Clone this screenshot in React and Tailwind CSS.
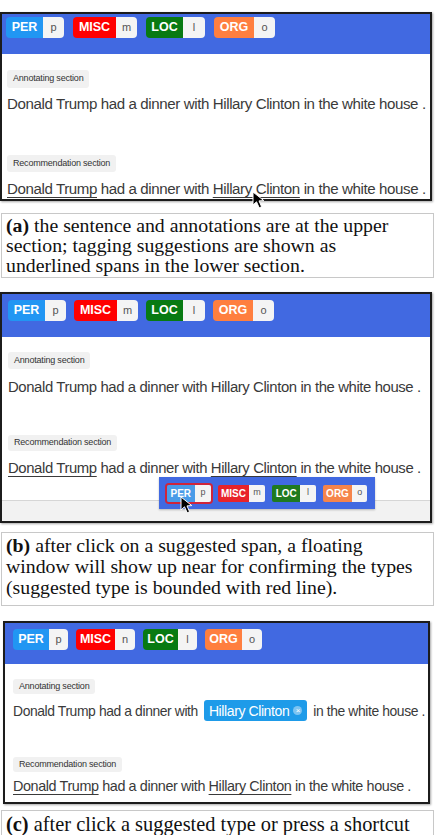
import React from "react";

const SANS = { fontFamily: '"Liberation Sans", Arial, sans-serif' };
const SERIF = { fontFamily: '"Liberation Serif", "Times New Roman", serif' };

// entity type buttons with their keyboard shortcut
function TypeChip({ label, hotkey, color, w, kw, small, outlined }) {
  return (
    <div
      className={
        "flex overflow-hidden " +
        (small ? "h-[17px] rounded-[2px] " : "h-[21px] rounded-[4px] ") +
        (outlined ? "ring-2 ring-[#d0243a]" : "")
      }
    >
      <div
        className={
          "flex items-center justify-center font-bold text-white " +
          color +
          " " +
          w +
          (small ? " text-[10px]" : " text-[12.5px]")
        }
      >
        {label}
      </div>
      <div
        className={
          "flex items-center justify-center bg-[#f4f4f4] text-[#555] " +
          kw +
          (small ? " text-[9px]" : " text-[11px]")
        }
      >
        {hotkey}
      </div>
    </div>
  );
}

function Toolbar({ pt, h, gap, px }) {
  return (
    <div className={"flex items-start bg-[#4169e1] " + pt + " " + h + " " + gap + " " + px}>
      <TypeChip label="PER" hotkey="p" color="bg-[#2196f3]" w="w-[37px]" kw="w-[21px]" />
      <TypeChip label="MISC" hotkey="m" color="bg-[#ff0000]" w="w-[43px]" kw="w-[21px]" />
      <TypeChip label="LOC" hotkey="l" color="bg-[#087a12]" w="w-[37px]" kw="w-[22px]" />
      <TypeChip label="ORG" hotkey="o" color="bg-[#ff7f3f]" w="w-[40px]" kw="w-[21px]" />
    </div>
  );
}

function SectionTag({ children, h, className }) {
  return (
    <div className={"flex " + className}>
      <div
        className={
          "flex items-center rounded-[3px] bg-[#f1f1f1] px-[6px] text-[9px] tracking-[-0.2px] text-[#333] " + h
        }
      >
        {children}
      </div>
    </div>
  );
}

function Suggested({ children }) {
  return <span className="underline decoration-[1px] underline-offset-[3px]">{children}</span>;
}

function Sentence({ className }) {
  return (
    <div className={"whitespace-nowrap " + className}>
      Donald Trump had a dinner with Hillary Clinton in the white house .
    </div>
  );
}

function SuggestedSentence({ className }) {
  return (
    <div className={"whitespace-nowrap " + className}>
      <Suggested>Donald Trump</Suggested> had a dinner with <Suggested>Hillary Clinton</Suggested> in the white
      house .
    </div>
  );
}

function Cursor({ className }) {
  return (
    <svg className={className} width="16" height="18" viewBox="0 0 16 18">
      <path
        d="M1 1 L1 14 L4.5 10.8 L7.2 16.8 L9.6 15.7 L7 9.9 L11.8 9.6 Z"
        fill="#000"
        stroke="#fff"
        strokeWidth="1"
        strokeLinejoin="round"
      />
    </svg>
  );
}

function Caption({ tag, lines, className }) {
  return (
    <div className={"border border-[#c8c8c8] bg-white px-[4px] text-[#111] " + className} style={SERIF}>
      {lines.map((line, i) => (
        <div key={i} className="whitespace-nowrap">
          {i === 0 && <span className="font-bold">{tag} </span>}
          {line}
        </div>
      ))}
    </div>
  );
}

export default function App() {
  return (
    <div className="h-[835px] w-[435px] overflow-hidden bg-white" style={SANS}>
      {/* (a) suggestions in the lower section */}
      <div className="relative mt-[12px] w-[432px] border-2 border-[#1c1c1c] shadow-[1px_1px_2px_rgba(0,0,0,0.35)]">
        <Toolbar pt="pt-[3px]" h="h-[40px]" gap="gap-[9px]" px="px-[4px]" />
        <div className="px-[5px] text-[#3a3a3a]">
          <SectionTag className="pt-[16px]" h="h-[18px]">
            Annotating section
          </SectionTag>
          <Sentence className="mt-[6px] text-[15.1px] leading-[20px] tracking-[-0.4px]" />
          <SectionTag className="mt-[41px]" h="h-[17px]">
            Recommendation section
          </SectionTag>
          <SuggestedSentence className="mt-[7px] text-[15.1px] leading-[20px] tracking-[-0.4px]" />
        </div>
        <Cursor className="absolute left-[250px] top-[177px]" />
      </div>

      <Caption
        tag="(a)"
        className="mx-[1px] mt-[12px] h-[65px] pt-[1px] text-[19.8px] leading-[20px]"
        lines={[
          "the sentence and annotations are at the upper",
          "section; tagging suggestions are shown as",
          "underlined spans in the lower section.",
        ]}
      />

      {/* (b) floating type picker */}
      <div className="relative mt-[14px] w-[432px] border-2 border-[#1c1c1c] shadow-[1px_1px_2px_rgba(0,0,0,0.35)]">
        <Toolbar pt="pt-[6px]" h="h-[43px]" gap="gap-[8px]" px="px-[6px]" />
        <div className="px-[6px] text-[#3a3a3a]">
          <SectionTag className="pt-[15px]" h="h-[17px]">
            Annotating section
          </SectionTag>
          <Sentence className="mt-[8px] text-[14.9px] leading-[20px] tracking-[-0.4px]" />
          <SectionTag className="mt-[38px]" h="h-[16px]">
            Recommendation section
          </SectionTag>
          <SuggestedSentence className="mt-[7px] text-[14.9px] leading-[20px] tracking-[-0.4px]" />
        </div>
        <div className="mt-[22px] h-[21px] border-t border-[#d6d6d6] bg-[#f2f2f2]" />
        <div className="absolute left-[157px] top-[183px] flex h-[32px] w-[216px] items-center gap-[7px] bg-[#4169e1] px-[8px] shadow-[0_1px_2px_rgba(0,0,0,0.25)]">
          <TypeChip small outlined label="PER" hotkey="p" color="bg-[#4a9be8]" w="w-[28px]" kw="w-[17px]" />
          <TypeChip small label="MISC" hotkey="m" color="bg-[#e8232a]" w="w-[31px]" kw="w-[17px]" />
          <TypeChip small label="LOC" hotkey="l" color="bg-[#1f7a1f]" w="w-[28px]" kw="w-[16px]" />
          <TypeChip small label="ORG" hotkey="o" color="bg-[#f5844a]" w="w-[30px]" kw="w-[15px]" />
        </div>
        <Cursor className="absolute left-[178px] top-[202px]" />
      </div>

      <Caption
        tag="(b)"
        className="mx-[1px] mt-[9px] h-[74px] pt-[2px] text-[19.8px] leading-[21px]"
        lines={[
          "after click on a suggested span, a floating",
          "window will show up near for confirming the types",
          "(suggested type is bounded with red line).",
        ]}
      />

      {/* (c) confirmed annotation */}
      <div className="relative ml-[3px] mt-[15px] w-[427px] border-2 border-[#1c1c1c] shadow-[1px_1px_2px_rgba(0,0,0,0.35)]">
        <div className="flex h-[41px] items-start gap-[8px] bg-[#4169e1] px-[8px] pt-[6px]">
          <TypeChip label="PER" hotkey="p" color="bg-[#2196f3]" w="w-[36px]" kw="w-[19px]" />
          <TypeChip label="MISC" hotkey="n" color="bg-[#ff0000]" w="w-[39px]" kw="w-[20px]" />
          <TypeChip label="LOC" hotkey="l" color="bg-[#087a12]" w="w-[35px]" kw="w-[19px]" />
          <TypeChip label="ORG" hotkey="o" color="bg-[#ff7f3f]" w="w-[37px]" kw="w-[20px]" />
        </div>
        <div className="px-[8px] text-[#3a3a3a]">
          <SectionTag className="pt-[15px]" h="h-[15px]">
            Annotating section
          </SectionTag>
          <div className="mt-[6px] flex h-[21px] items-center whitespace-nowrap text-[13.9px] leading-[20px] tracking-[-0.4px]">
            <span>Donald Trump had a dinner with</span>
            <span className="mx-[6px] inline-flex h-[21px] items-center gap-[4px] rounded-[3px] bg-[#1e9be9] px-[5px] text-[14px] text-white">
              Hillary Clinton
              <span className="flex h-[9px] w-[9px] items-center justify-center rounded-full bg-[#7cc4f2] text-[8px] leading-none text-white">
                ×
              </span>
            </span>
            <span>in the white house .</span>
          </div>
          <SectionTag className="mt-[36px]" h="h-[15px]">
            Recommendation section
          </SectionTag>
          <SuggestedSentence className="mt-[4px] pb-[6px] text-[14.4px] leading-[20px] tracking-[-0.4px]" />
        </div>
      </div>

      <Caption
        tag="(c)"
        className="mx-[1px] mt-[6px] h-[40px] pt-[3px] text-[20.4px] leading-[21px]"
        lines={["after click a suggested type or press a shortcut"]}
      />
    </div>
  );
}
